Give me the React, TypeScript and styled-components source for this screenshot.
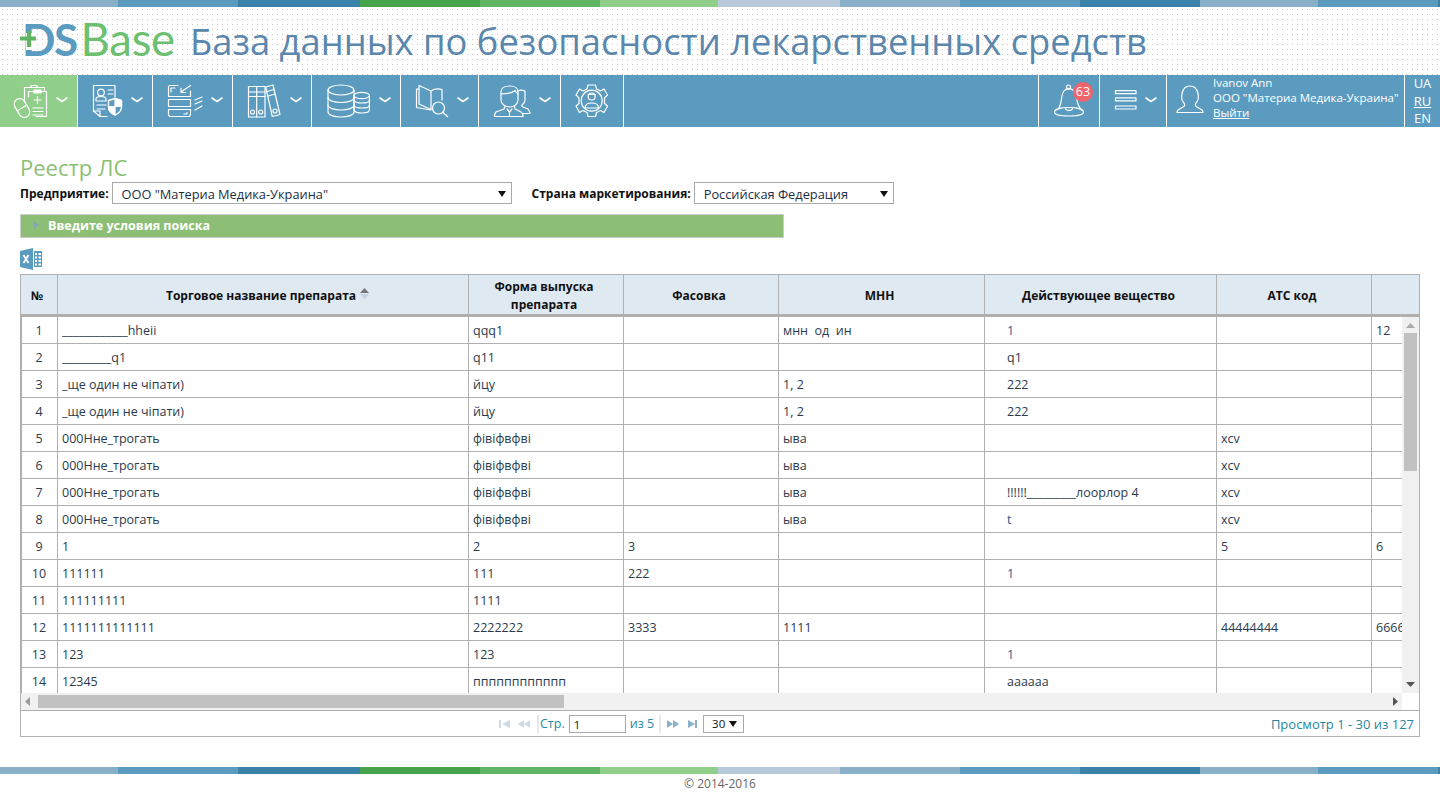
import React from "react";
import styled, { createGlobalStyle } from "styled-components";

const Global = createGlobalStyle`
  html, body { margin: 0; padding: 0; height: 100%; overflow: hidden; background: #fff; }
  body { font-family: "Open Sans", "Liberation Sans", sans-serif; color: #1c2f45; }
  #root { height: 100%; }
`;

const Page = styled.div`
  height: 799px;
  display: flex;
  flex-direction: column;
`;

const StripeBar = styled.div`
  display: flex;
  height: 7px;
  flex: none;
`;
const StripeSeg = styled.div<{ $w: number; $c: string }>`
  width: ${(p) => p.$w}px;
  background: ${(p) => p.$c};
  flex: none;
`;

const stripes: [number, string][] = [
  [118, "#8aafc9"], [120, "#5b9bc0"], [122, "#3b82ab"], [120, "#46a34c"], [120, "#5fb564"],
  [118, "#90cf8a"], [122, "#b8c9d9"], [120, "#8aafc9"], [120, "#5b9bc0"], [120, "#3b82ab"],
  [118, "#8aafc9"], [120, "#5b9bc0"], [2, "#3b82ab"],
];

const Stripes = () => (
  <StripeBar>
    {stripes.map(([w, c], i) => (
      <StripeSeg key={i} $w={w} $c={c} />
    ))}
  </StripeBar>
);

const Head = styled.header`
  height: 68px;
  flex: none;
  display: flex;
  align-items: center;
  padding-left: 20px;
  background-color: #fff;
  background-image: radial-gradient(circle at 2.5px 2.5px, #c8c8c8 0.6px, transparent 0.9px);
  background-size: 5px 5px;
`;
const Logo = styled.div`
  position: relative;
  width: 170px;
  flex: none;
  display: flex;
  align-items: baseline;
  font-family: Lato, sans-serif;
  font-size: 44px;
  line-height: 50px;
  padding-left: 2px;
  box-sizing: border-box;
  margin-top: -4px;
`;
const LogoDS = styled.span`
  color: #5b9bc0;
  font-weight: 700;
  letter-spacing: -1.5px;
  margin-right: 4px;
`;
const LogoBase = styled.span`
  color: #6cc070;
  font-weight: 400;
  font-size: 45.5px;
  letter-spacing: -0.3px;
`;
const LogoPlus = styled.svg`
  position: absolute;
  left: 0;
  top: 12px;
`;
const Title = styled.h1`
  margin: 0;
  font-size: 36.35px;
  font-weight: 400;
  color: #5b87ad;
  white-space: nowrap;
`;

const Nav = styled.nav`
  height: 52px;
  flex: none;
  display: flex;
  background: #5b9bc0;
`;
const NavCell = styled.div<{ $w: number; $active?: boolean }>`
  width: ${(p) => p.$w}px;
  flex: none;
  height: 100%;
  box-sizing: border-box;
  border-right: 1px solid #fff;
  background: ${(p) => (p.$active ? "#90cf8a" : "transparent")};
`;
const NavSpacer = styled.div`
  flex: 1;
  border-right: 1px solid #fff;
`;
const NavIcon = styled.svg`
  display: block;
  flex: none;
`;
const UserCell = styled.div`
  width: 238px;
  flex: none;
  box-sizing: border-box;
  display: flex;
  border-right: 1px solid #fff;
  height: 100%;
`;
const UserText = styled.div`
  display: flex;
  flex-direction: column;
  color: #fff;
  font-size: 11.5px;
  line-height: 15px;
  white-space: nowrap;
`;
const UserName = styled.span`
  font-size: 11.5px;
`;
const Logout = styled.span`
  text-decoration: underline;
`;
const Langs = styled.div`
  width: 35px;
  flex: none;
  display: flex;
  flex-direction: column;
  align-items: center;
  color: #fff;
  font-size: 13px;
  line-height: 17.5px;
`;
const Lang = styled.span<{ $on?: boolean }>`
  text-decoration: ${(p) => (p.$on ? "underline" : "none")};
`;
const BellBadge = styled.span`
  position: absolute;
  left: 34px;
  top: 7px;
  width: 20px;
  height: 20px;
  border-radius: 50%;
  background: #f0656b;
  color: #fff;
  font-size: 12.5px;
  line-height: 20px;
  text-align: center;
`;
const BellCell = styled(NavCell)`
  position: relative;
`;

const Main = styled.main`
  flex: 1;
  padding: 25px 20px 0;
  display: flex;
  flex-direction: column;
  min-height: 0;
`;
const PageTitle = styled.h2`
  margin: 0;
  font-size: 22px;
  line-height: 30px;
  font-weight: 400;
  color: #8cbf75;
`;
const Filters = styled.div`
  display: flex;
  align-items: center;
  height: 22px;
`;
const FilterLabel = styled.label`
  font-size: 12px;
  font-weight: 700;
  color: #111;
  margin-right: 3px;
  white-space: nowrap;
`;
const SelectBox = styled.div<{ $w: number }>`
  width: ${(p) => p.$w}px;
  height: 22px;
  box-sizing: border-box;
  border: 1px solid #aaa;
  display: flex;
  align-items: center;
  justify-content: space-between;
  padding: 1px 4px 0 9px;
  font-size: 12.8px;
  color: #1c2f45;
  margin-right: 20px;
  white-space: nowrap;
`;
const Caret = styled.span`
  width: 0;
  height: 0;
  border-left: 4px solid transparent;
  border-right: 4px solid transparent;
  border-top: 6px solid #111;
  margin-right: 1px;
`;
const SearchBar = styled.div`
  margin-top: 10px;
  width: 764px;
  height: 24px;
  box-sizing: border-box;
  border: 1px solid #ccc;
  background: #8cbf75;
  display: flex;
  align-items: center;
  padding: 0 0 2px 13px;
  color: #fff;
  font-size: 12.5px;
  font-weight: 700;
`;
const SearchArrow = styled.span`
  width: 0;
  height: 0;
  border-top: 4px solid transparent;
  border-bottom: 4px solid transparent;
  border-left: 5px solid #7fa8b0;
  margin-right: 9px;
`;
const ExcelIcon = styled.svg`
  display: block;
  margin-top: 10px;
  flex: none;
`;
const Grid = styled.div`
  margin-top: 4px;
  width: 1400px;
  box-sizing: border-box;
  border: 1px solid #b0b0b0;
  display: flex;
  flex-direction: column;
  flex: none;
`;
const Scroller = styled.div`
  overflow: hidden;
`;
const Table = styled.table`
  border-collapse: separate;
  border-spacing: 0;
  table-layout: fixed;
  width: 1471px;
  font-size: 12.5px;
`;
const Th = styled.th`
  height: 41px;
  padding: 3px 6px 0 2px;
  box-sizing: border-box;
  background: #dfe9f2;
  border-right: 1px solid #b0b0b0;
  border-bottom: 3px solid #b0b0b0;
  font-size: 12px;
  line-height: 18px;
  font-weight: 700;
  color: #111;
  text-align: center;
`;
const SortMark = styled.svg`
  margin: 0 -13px 0 4px;
  vertical-align: 1px;
`;
const BodyRow = styled.div`
  display: flex;
  height: 376px;
`;
const Td = styled.td<{ $center?: boolean; $pad?: number; $blue?: boolean }>`
  height: 27px;
  box-sizing: border-box;
  padding: 0 4px 0 ${(p) => p.$pad ?? 4}px;
  border-right: 1px solid #b0b0b0;
  border-bottom: 1px solid #b0b0b0;
  white-space: pre;
  overflow: hidden;
  text-align: ${(p) => (p.$center ? "center" : "left")};
  color: ${(p) => (p.$blue ? "#1d5a90" : "#2b3b4d")};
  &:first-child {
    box-shadow: inset 1px 0 #b0b0b0;
  }
`;
const VBar = styled.div`
  width: 17px;
  flex: none;
  background: #f1f1f1;
  display: flex;
  flex-direction: column;
  align-items: center;
  justify-content: space-between;
  margin-left: auto;
  position: relative;
`;
const VThumb = styled.div`
  position: absolute;
  top: 16px;
  left: 2px;
  width: 13px;
  height: 138px;
  background: #c1c1c1;
`;
const VArrow = styled.svg`
  display: block;
  flex: none;
  margin: 6px 0;
`;
const HRow = styled.div`
  display: flex;
  height: 17px;
`;
const HBar = styled.div`
  flex: 1;
  background: #f1f1f1;
  display: flex;
  align-items: center;
  justify-content: space-between;
  padding: 0 4px;
  position: relative;
`;
const HThumb = styled.div`
  position: absolute;
  left: 17px;
  top: 2px;
  height: 13px;
  width: 526px;
  background: #c1c1c1;
`;
const HCorner = styled.div`
  width: 17px;
  flex: none;
`;
const Pager = styled.div`
  height: 25px;
  border-top: 1px solid #b0b0b0;
  display: flex;
  align-items: center;
  justify-content: space-between;
  font-size: 12.5px;
  color: #2a8aa5;
  padding: 0 5px 0 478px;
`;
const PagerCenter = styled.div`
  display: flex;
  align-items: center;
  height: 100%;
`;
const PagerSep = styled.span<{ $l: number; $r: number }>`
  width: 2px;
  height: 18px;
  background: #e8e8e8;
  margin: 0 ${(p) => p.$r}px 0 ${(p) => p.$l}px;
`;
const PagerInput = styled.div`
  width: 57px;
  height: 18px;
  box-sizing: border-box;
  border: 1px solid #aaa;
  margin: 0 4px;
  font-size: 11.5px;
  line-height: 17px;
  padding-left: 4px;
  color: #111;
`;
const PagerSelect = styled.div`
  width: 41px;
  height: 18px;
  box-sizing: border-box;
  border: 1px solid #aaa;
  font-size: 11.5px;
  line-height: 17px;
  padding-left: 8px;
  color: #111;
  display: flex;
  align-items: center;
  justify-content: space-between;
  padding-right: 5px;
  margin-left: 4px;
`;
const PagerGlyph = styled.svg`
  display: block;
`;
const PagerInfo = styled.span`
  white-space: nowrap;
  font-size: 13px;
  color: #1f87a0;
`;
const Foot = styled.footer`
  flex: none;
  height: 25px;
  font-size: 12px;
  line-height: 20px;
  text-align: center;
  color: #666;
`;

const W = { fill: "none", stroke: "#fff", strokeWidth: 1.2, strokeLinecap: "round" as const, strokeLinejoin: "round" as const };

const Chevron = ({ x }: { x: number }) => (
  <path d={`M${x} 98 L${x + 5} 101.5 L${x + 10} 98`} fill="none" stroke="#fff" strokeWidth={1.6} strokeLinecap="round" strokeLinejoin="round" />
);

/* each drawing uses page coordinates through its viewBox */
const IconBox = ({ x, w, children }: { x: number; w: number; children: React.ReactNode }) => (
  <NavIcon width={w} height={52} viewBox={`${x} 75 ${w} 52`}>
    <g {...W}>{children}</g>
  </NavIcon>
);

const IconMeds = () => (
  <IconBox x={0} w={77}>
    <path d="M24.5 102V87.5H44.5V91" />
    <path d="M31 87.5V85.5H37V87.5" />
    <path d="M36 116.5H46.5V91.5H28.5V97" />
    <rect x="34" y="90" width="7" height="3" fill="#fff" />
    <path d="M37.5 96.5V103.5M34 100H41M33 108H43M33 111.5H43M33 115H43" />
    <g transform="rotate(-30 22 108)">
      <rect x="16.5" y="98" width="11" height="20" rx="5.5" />
      <path d="M16.5 108H27.5" />
    </g>
    <Chevron x={57} />
  </IconBox>
);
const IconDoc = () => (
  <IconBox x={78} w={74}>
    <path d="M107 116.5H100L93.5 111V85.5H115V97" />
    <path d="M93.5 111H100V116.5" />
    <circle cx="101" cy="92.5" r="3.3" />
    <path d="M96 101V99C96 97 98 96.5 101 96.5C104 96.5 106 97 106 99V101H96Z" />
    <path d="M108 90H113M108 94H113M97 105H106M97 109H105" />
    <path d="M108.5 100.5L115 98.5L121.5 100.5V107C121.5 111 118 114 115 115C112 114 108.5 111 108.5 107Z" strokeWidth={1.4} />
    <path d="M115 98.5L121.5 100.5V106.5H115ZM115 106.5V115C112 114 108.5 111 108.5 107V106.5Z" fill="#fff" />
    <Chevron x={132} />
  </IconBox>
);
const IconCopier = () => (
  <IconBox x={153} w={79}>
    <path d="M178 85.5H170C169 85.5 168.5 86 168.5 87V96.5H190.5V91" />
    <path d="M171 92V88H175" />
    <path d="M190.5 85.5L181 92M181 88V92.5H185.5" />
    <rect x="168.5" y="99.5" width="22" height="7" />
    <path d="M168.5 109.5H190.5V114C190.5 115.5 190 116.5 188.5 116.5H170.5C169 116.5 168.5 115.5 168.5 114ZM187 112.5V114H184" />
    <path d="M195 100L202 97M195 104L202 101M195 110L202 106" />
    <Chevron x={212} />
  </IconBox>
);
const IconBinders = () => (
  <IconBox x={233} w={78}>
    <rect x="248.5" y="86.5" width="16.5" height="30.5" />
    <path d="M256.7 86.5V117M248.5 92H265M248.5 96.5H265" />
    <circle cx="252.5" cy="112" r="2" />
    <circle cx="260.7" cy="112" r="2" />
    <path d="M265.7 87L273 85L280 114.5L272.3 116.5Z" />
    <path d="M267 91.5L274.2 89.5M268 96L275.2 94" />
    <circle cx="275" cy="111" r="2" />
    <Chevron x={291} />
  </IconBox>
);
const IconDb = () => (
  <IconBox x={312} w={88}>
    <ellipse cx="341" cy="90" rx="13" ry="5" />
    <path d="M328 90V112C328 115 334 117 341 117C348 117 354 115 354 112V90" />
    <path d="M328 97.5C328 100.5 334 102.5 341 102.5C348 102.5 354 100.5 354 97.5M328 105C328 108 334 110 341 110C348 110 354 108 354 105" />
    <ellipse cx="361.7" cy="95.5" rx="7.7" ry="3.2" />
    <path d="M354 95.5V110C354.5 112 358 113 361.7 113C366 113 369.4 112 369.4 110V95.5" />
    <path d="M354 100.5C355 102.5 358 103 361.7 103C366 103 369.4 102.5 369.4 100.5M354 105.5C355 107.5 358 108 361.7 108C366 108 369.4 107.5 369.4 105.5" />
    <Chevron x={380} />
  </IconBox>
);
const IconBook = () => (
  <IconBox x={401} w={77}>
    <path d="M419 89H416.5V107.5L431 110" />
    <path d="M419 85.5V104L431 109.5V91Z" />
    <path d="M431 91C434 89 438 88.5 442 89.5V100" />
    <circle cx="438.5" cy="108" r="6" />
    <path d="M443 112.5L447.5 116.5" strokeWidth={1.5} />
    <Chevron x={458} />
  </IconBox>
);
const IconPeople = () => (
  <IconBox x={479} w={81}>
    <path d="M501 100V92C501 88 505 86 510 86C515 86 518 88.5 518 92V100C518 104 514 107 510 107C505 107 501 104 501 100Z" />
    <path d="M501 94C506 94 512 93 515 90.5C516 92 517 93.5 518 94" />
    <path d="M505 106L504 109L496 112C495 113 494.5 115 494.5 116.5H523C523 115 522.5 113 521 112L515 109L514.5 106" />
    <path d="M507 109L509.5 112L512 109M509.5 112V116.5" />
    <path d="M518 91C520 89.5 522 90 525 91V100C525 102 524 103.5 522 105L522 106.5L528 109C529 110.5 530 112 530 113.5H523" />
    <Chevron x={540} />
  </IconBox>
);
const IconGear = () => (
  <IconBox x={561} w={62}>
    <path d="M588 85L595.5 85L596.5 89L600.5 91L604 89L607.5 95L604.5 98V103.5L607.5 106L604 112.5L600.5 110.5L596.5 112.5L595.5 116.5H588L587 112.5L583 110.5L579.5 112.5L576 106L579 103.5V98L576 95L579.5 89L583 91L587 89Z" />
    <circle cx="591.7" cy="100.7" r="10.5" />
    <circle cx="591.7" cy="96.5" r="3.5" />
    <path d="M585 108C585 104.5 588 103 591.7 103C595.5 103 598.5 104.5 598.5 108Z" />
    <path d="M588 94.5H595.5" />
  </IconBox>
);
const IconBell = () => (
  <NavIcon width={60} height={52} viewBox="1039 75 60 52">
    <g {...W}>
      <circle cx="1068.5" cy="87" r="2" />
      <path d="M1058 109C1063 104 1060 93 1065 90C1067 88.5 1071 88.5 1073 90C1078 93 1075 104 1081 109" />
      <path d="M1054.5 112C1054.5 109.5 1060 107.5 1069 107.5C1078 107.5 1083.5 109.5 1083.5 112C1083.5 114.5 1078 116 1069 116C1060 116 1054.5 114.5 1054.5 112Z" />
      <path d="M1065.5 108.5C1065.5 111 1072.5 111 1072.5 108.5" />
    </g>
  </NavIcon>
);
const IconMenu = () => (
  <IconBox x={1100} w={66}>
    <rect x="1115.5" y="90.7" width="20.5" height="3" />
    <rect x="1115.5" y="97.8" width="20.5" height="3" />
    <rect x="1115.5" y="106" width="20.5" height="3" />
    <Chevron x={1146} />
  </IconBox>
);
const IconUser = () => (
  <NavIcon width={46} height={52} viewBox="1167 75 46 52">
    <g {...W}>
      <path d="M1184 103C1180 99 1181 86 1190 86C1199 86 1200 99 1196 103C1195 105 1195 106 1197 107L1202 110C1203 111 1203 112 1203 112.5H1177C1177 112 1177 111 1178 110L1183 107C1185 106 1185 105 1184 103Z" />
    </g>
  </NavIcon>
);

const cols = [37, 411, 155, 155, 206, 232, 155, 120];
const heads = ["№", "Торговое название препарата", "Форма выпуска препарата", "Фасовка", "МНН", "Действующее вещество", "АТС код", ""];

const rows: string[][] = [
  ["____________hheii", "qqq1", "", "мнн  од  ин", "1", "", "12"],
  ["_________q1", "q11", "", "", "q1", "", ""],
  ["_ще один не чіпати)", "йцу", "", "1, 2", "222", "", ""],
  ["_ще один не чіпати)", "йцу", "", "1, 2", "222", "", ""],
  ["000Нне_трогать", "фівіфвфві", "", "ыва", "", "xcv", ""],
  ["000Нне_трогать", "фівіфвфві", "", "ыва", "", "xcv", ""],
  ["000Нне_трогать", "фівіфвфві", "", "ыва", "!!!!!!_________лоорлор 4", "xcv", ""],
  ["000Нне_трогать", "фівіфвфві", "", "ыва", "t", "xcv", ""],
  ["1", "2", "3", "", "", "5", "6"],
  ["111111", "111", "222", "", "1", "", ""],
  ["111111111", "1111", "", "", "", "", ""],
  ["1111111111111", "2222222", "3333", "1111", "", "44444444", "66666666"],
  ["123", "123", "", "", "1", "", ""],
  ["12345", "пппппппппппп", "", "", "аааааа", "", ""],
];

const ColGroup = () => (
  <colgroup>
    {cols.map((w, i) => (
      <col key={i} style={{ width: w }} />
    ))}
  </colgroup>
);

const tri = "#555";

export default function App() {
  return (
    <Page>
      <Global />
      <Stripes />
      <Head>
        <Logo>
          <LogoDS>DS</LogoDS>
          <LogoBase>Base</LogoBase>
          <LogoPlus width="18" height="30" viewBox="0 0 18 30">
            <rect x="6" y="7" width="8" height="17" fill="#fff" />
            <path d="M0 12.5H16M9 5V21" stroke="#5fb564" strokeWidth="4.2" fill="none" />
          </LogoPlus>
        </Logo>
        <Title>База данных по безопасности лекарственных средств</Title>
      </Head>
      <Nav>
        <NavCell $w={78} $active><IconMeds /></NavCell>
        <NavCell $w={75}><IconDoc /></NavCell>
        <NavCell $w={80}><IconCopier /></NavCell>
        <NavCell $w={79}><IconBinders /></NavCell>
        <NavCell $w={89}><IconDb /></NavCell>
        <NavCell $w={78}><IconBook /></NavCell>
        <NavCell $w={82}><IconPeople /></NavCell>
        <NavCell $w={63}><IconGear /></NavCell>
        <NavSpacer />
        <BellCell $w={61}>
          <IconBell />
          <BellBadge>63</BellBadge>
        </BellCell>
        <NavCell $w={67}><IconMenu /></NavCell>
        <UserCell>
          <IconUser />
          <UserText>
            <UserName>Ivanov Ann</UserName>
            <span>ООО "Материа Медика-Украина"</span>
            <Logout>Выйти</Logout>
          </UserText>
        </UserCell>
        <Langs>
          <Lang>UA</Lang>
          <Lang $on>RU</Lang>
          <Lang>EN</Lang>
        </Langs>
      </Nav>
      <Main>
        <PageTitle>Реестр ЛС</PageTitle>
        <Filters>
          <FilterLabel>Предприятие:</FilterLabel>
          <SelectBox $w={400}>ООО "Материа Медика-Украина"<Caret /></SelectBox>
          <FilterLabel>Страна маркетирования:</FilterLabel>
          <SelectBox $w={200}>Российская Федерация<Caret /></SelectBox>
        </Filters>
        <SearchBar>
          <SearchArrow />
          Введите условия поиска
        </SearchBar>
        <ExcelIcon width="22" height="22" viewBox="0 0 22 22">
          <path d="M0 3L13 0V22L0 19Z" fill="#5b9bc0" />
          <path d="M3.5 7L8.5 15M8.5 7L3.5 15" stroke="#fff" strokeWidth="1.8" fill="none" />
          <path d="M14 3H22V19H14Z" fill="#5b9bc0" />
          <path d="M15 5H17V7H15ZM18.5 5H21V7H18.5ZM15 8.5H17V10.5H15ZM18.5 8.5H21V10.5H18.5ZM15 12H17V14H15ZM18.5 12H21V14H18.5ZM15 15.5H17V17.5H15ZM18.5 15.5H21V17.5H18.5Z" fill="#fff" />
        </ExcelIcon>
        <Grid>
          <Scroller>
            <Table>
              <ColGroup />
              <thead>
                <tr>
                  {heads.map((h, i) => (
                    <Th key={i}>
                      {h}
                      {i === 1 && (
                        <SortMark width="9" height="11" viewBox="0 0 9 11">
                          <path d="M4.5 0L9 5H0Z" fill="#777" />
                          <path d="M4.5 11L9 6H0Z" fill="#c3d3e2" />
                        </SortMark>
                      )}
                    </Th>
                  ))}
                </tr>
              </thead>
            </Table>
          </Scroller>
          <BodyRow>
            <Scroller>
              <Table>
                <ColGroup />
                <tbody>
                  {rows.map((r, i) => (
                    <tr key={i}>
                      <Td $center>{i + 1}</Td>
                      {r.map((c, j) => (
                        <Td key={j} $pad={j === 4 ? 22 : 4} $blue={j === 4 && (c === "1" || c === "t")}>{c}</Td>
                      ))}
                      <Td />
                    </tr>
                  ))}
                </tbody>
              </Table>
            </Scroller>
            <VBar>
              <VArrow width="9" height="5" viewBox="0 0 9 5"><path d="M4.5 0L9 5H0Z" fill="#aaa" /></VArrow>
              <VThumb />
              <VArrow width="9" height="5" viewBox="0 0 9 5"><path d="M4.5 5L9 0H0Z" fill={tri} /></VArrow>
            </VBar>
          </BodyRow>
          <HRow>
            <HBar>
              <svg width="5" height="9" viewBox="0 0 5 9"><path d="M0 4.5L5 0V9Z" fill="#999" /></svg>
              <HThumb />
              <svg width="5" height="9" viewBox="0 0 5 9"><path d="M5 4.5L0 0V9Z" fill={tri} /></svg>
            </HBar>
            <HCorner />
          </HRow>
          <Pager>
            <PagerCenter>
              <PagerGlyph width="32" height="10" viewBox="0 0 32 10" fill="#ccdbe6">
                <path d="M0 1H2V9H0ZM11 1V9L3 5ZM25 1V9L19 5ZM31 1V9L25 5Z" />
              </PagerGlyph>
              <PagerSep $l={6} $r={1} />
              <span>Стр.</span>
              <PagerInput>1</PagerInput>
              <span>из 5</span>
              <PagerSep $l={5} $r={6} />
              <PagerGlyph width="32" height="10" viewBox="0 0 32 10" fill="#8cb0c8">
                <path d="M0 1V9L6 5ZM6 1V9L12 5ZM21 1V9L28 5ZM28 1H30V9H28Z" />
              </PagerGlyph>
              <PagerSelect>30<Caret /></PagerSelect>
            </PagerCenter>
            <PagerInfo>Просмотр 1 - 30 из 127</PagerInfo>
          </Pager>
        </Grid>
      </Main>
      <Stripes />
      <Foot>© 2014-2016</Foot>
    </Page>
  );
}
